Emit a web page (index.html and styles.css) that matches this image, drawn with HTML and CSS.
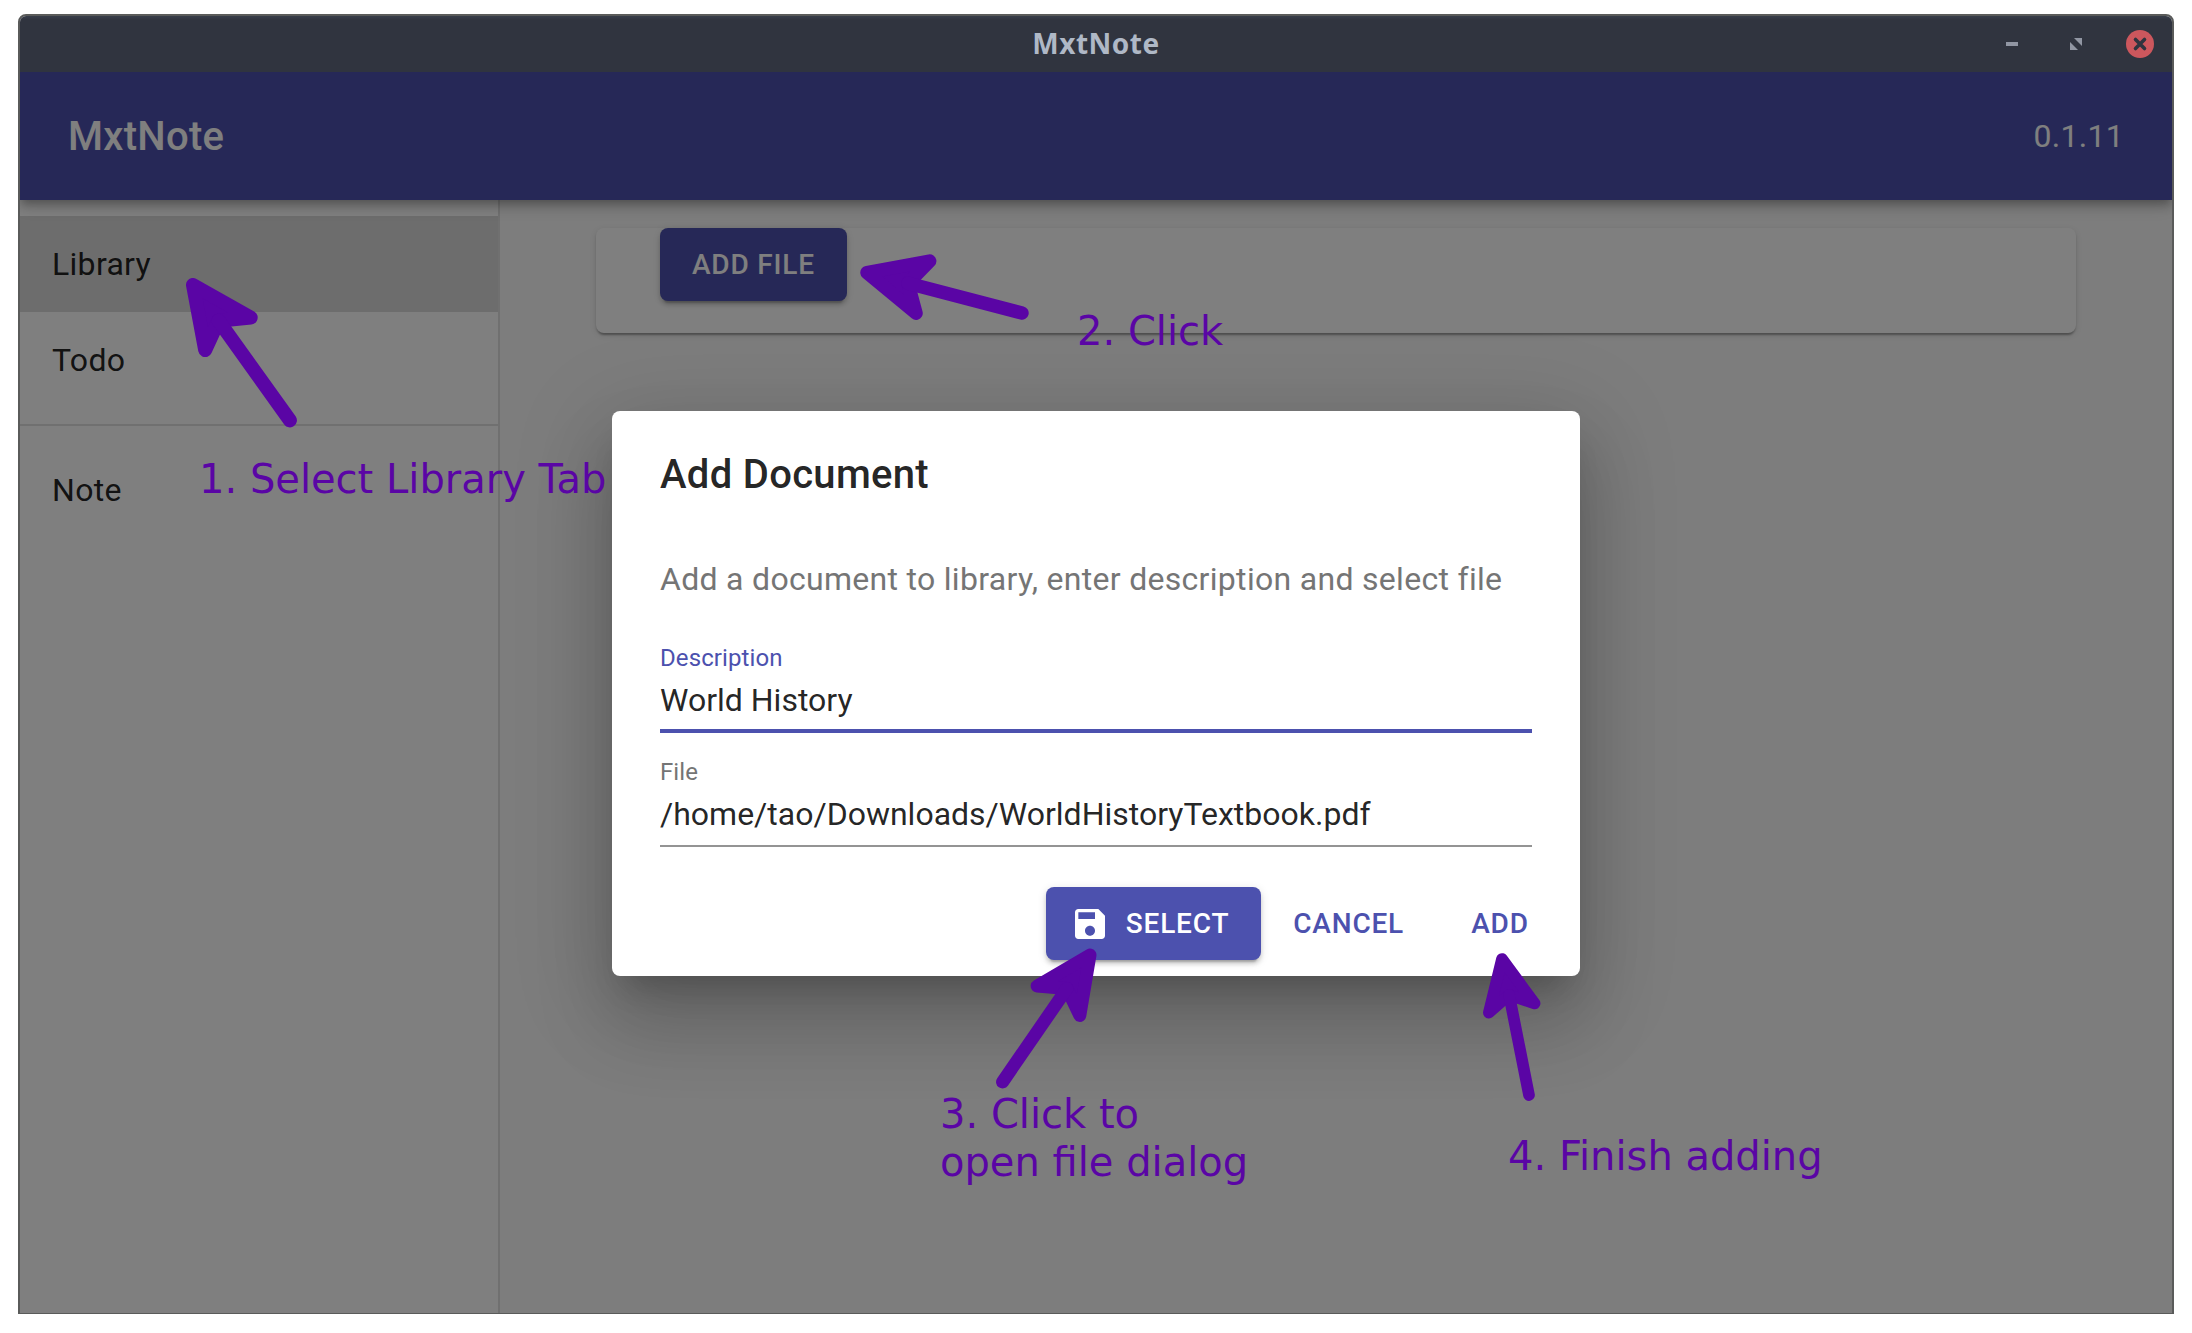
FILE: index.html
```html
<!DOCTYPE html>
<html lang="en">
<head>
<meta charset="utf-8">
<title>MxtNote</title>
<link rel="stylesheet" href="styles.css">
</head>
<body>
<div class="window">
  <header class="titlebar">
    <span class="titlebar-name">MxtNote</span>
    <svg class="window-controls" width="134" height="28" viewBox="0 0 134 28">
      <rect x="0" y="12" width="12" height="4" fill="#9196a3"/>
      <path d="M68 8h8v8zM64 12v8h8z" fill="#9196a3"/>
      <circle cx="134" cy="14" r="14" fill="#cc575d"/>
      <path d="M129.500 9.500l9 9M138.500 9.500l-9 9" stroke="#2f343f" stroke-width="3.600" stroke-linecap="round"/>
    </svg>
  </header>
  <div class="app">
    <header class="appbar">
      <h1 class="appbar-title">MxtNote</h1>
      <span class="appbar-version">0.1.11</span>
    </header>
    <div class="content">
      <nav class="sidebar">
        <div class="nav-group">
          <a class="nav-item selected">Library</a>
          <a class="nav-item">Todo</a>
        </div>
        <div class="nav-group">
          <a class="nav-item">Note</a>
        </div>
      </nav>
      <main class="main">
        <section class="card">
          <button class="button contained">ADD FILE</button>
        </section>
      </main>
    </div>
    <div class="backdrop">
      <section class="dialog">
        <h2 class="dialog-title">Add Document</h2>
        <div class="dialog-content">
          <p class="dialog-text">Add a document to library, enter description and select file</p>
          <div class="field focused">
            <span class="field-label">Description</span>
            <span class="field-value">World History</span>
          </div>
          <div class="field">
            <span class="field-label">File</span>
            <span class="field-value">/home/tao/Downloads/WorldHistoryTextbook.pdf</span>
          </div>
        </div>
        <div class="dialog-actions">
          <button class="button contained">
            <svg class="save-icon" viewBox="0 0 24 24"><path fill="currentColor" d="M17 3H5c-1.110 0-2 .9-2 2v14c0 1.100.89 2 2 2h14c1.100 0 2-.9 2-2V7l-4-4zm-5 16c-1.660 0-3-1.340-3-3s1.340-3 3-3 3 1.340 3 3-1.340 3-3 3zm3-10H5V5h10v4z"/></svg>
            SELECT
          </button>
          <button class="button">CANCEL</button>
          <button class="button">ADD</button>
        </div>
      </section>
    </div>
  </div>
</div>
<div class="annotations">
  <svg class="arrows" width="2192" height="1333" viewBox="0 0 2192 1333">
    <defs>
      <g id="arrow" fill="#5a05a5" stroke="#5a05a5" stroke-width="14" stroke-linecap="round" stroke-linejoin="round">
        <path d="M0 0L60 -28L44 0L60 28Z"/>
        <path d="M44 0H166.500"/>
      </g>
    </defs>
    <use href="#arrow" transform="translate(193 285) rotate(54.400)"/>
    <use href="#arrow" transform="translate(867 272.500) rotate(14.640) scale(.962)"/>
    <use href="#arrow" transform="translate(1090 955) rotate(124.560) scale(.926)"/>
    <use href="#arrow" transform="translate(1502 959) rotate(78.770) scale(.833)"/>
  </svg>
  <span class="note note-library">1. Select Library Tab</span>
  <span class="note note-click">2. Click</span>
  <span class="note note-select">3. Click to<br>open file dialog</span>
  <span class="note note-finish">4. Finish adding</span>
</div>
</body>
</html>
```
FILE: styles.css
```css
* { box-sizing: border-box; }

body {
  margin: 0;
  padding: 14px 18px 19px;
  height: 1333px;
  background: #fff;
  font-family: Roboto, sans-serif;
  font-size: 32px;
  line-height: 1.5;
  letter-spacing: .00938em;
  color: rgba(0, 0, 0, .87);
}

.window {
  display: flex;
  flex-direction: column;
  height: 1300px;
  border: 2px solid #5a5b5a;
  border-bottom-width: 1px;
  border-radius: 8px 8px 0 0;
  overflow: hidden;
}

.titlebar {
  display: grid;
  grid-template-columns: 1fr auto 1fr;
  align-items: center;
  height: 56px;
  flex: none;
  padding-right: 18px;
  background: linear-gradient(#383e4a, #30343f 4px);
}

.titlebar-name {
  grid-column: 2;
  padding-left: 18px;
  font: bold 28px/54px "Noto Sans", sans-serif;
  height: 56px;
  letter-spacing: .5px;
  color: #afb8c6;
}

.window-controls {
  justify-self: end;
  margin-right: 14px;
  overflow: visible;
}

.app {
  position: relative;
  display: flex;
  flex-direction: column;
  flex: 1;
  background: #fafafa;
  overflow: hidden;
}

.appbar {
  z-index: 1;
  display: flex;
  align-items: center;
  justify-content: space-between;
  height: 128px;
  flex: none;
  padding: 0 48px;
  background: #4c51ae;
  color: #fff;
  box-shadow: 0 4px 8px -2px rgba(0, 0, 0, .2), 0 8px 10px rgba(0, 0, 0, .14), 0 2px 20px rgba(0, 0, 0, .12);
}

.appbar-title {
  margin: 0;
  padding-top: 1px;
  font-size: 40px;
  font-weight: 500;
  line-height: 1.6;
  letter-spacing: .0075em;
}

.content {
  display: flex;
  flex: 1;
}

.sidebar {
  width: 480px;
  background: #fff;
  border-right: 2px solid #e0e0e0;
}

.nav-group { padding: 16px 0; }

.nav-group + .nav-group { border-top: 2px solid #e0e0e0; }

.nav-item {
  display: block;
  height: 96px;
  padding: 24px 32px;
}

.nav-item.selected { background: #dadada; }

.main {
  flex: 1;
  padding: 28px 96px;
}

.card {
  display: flex;
  align-items: flex-start;
  height: 105px;
  padding: 0 64px;
  background: #fff;
  border-radius: 8px;
  box-shadow: 0 4px 2px -2px rgba(0, 0, 0, .2), 0 2px 2px rgba(0, 0, 0, .14), 0 2px 6px rgba(0, 0, 0, .12);
}

.button {
  display: flex;
  align-items: center;
  justify-content: center;
  min-width: 128px;
  height: 73px;
  padding: 12px 16px;
  border: 0;
  border-radius: 8px;
  background: none;
  color: #4c51ae;
  font: 500 28px/49px Roboto, sans-serif;
  letter-spacing: .02857em;
}

.button.contained {
  padding: 12px 32px;
  background: #4c51ae;
  color: #fff;
  box-shadow: 0 6px 2px -4px rgba(0, 0, 0, .2), 0 4px 4px rgba(0, 0, 0, .14), 0 2px 10px rgba(0, 0, 0, .12);
}

.save-icon {
  width: 40px;
  height: 40px;
  margin: 0 16px 0 -8px;
}

.backdrop {
  position: absolute;
  inset: 0;
  z-index: 2;
  display: flex;
  align-items: center;
  justify-content: center;
  padding-top: 130px;
  padding-bottom: 128px;
  background: rgba(0, 0, 0, .5);
}

.dialog {
  width: 968px;
  background: #fff;
  border-radius: 8px;
  box-shadow: 0 22px 30px -14px rgba(0, 0, 0, .2), 0 48px 76px 6px rgba(0, 0, 0, .14), 0 18px 92px 16px rgba(0, 0, 0, .12);
}

.dialog-title {
  margin: 0;
  padding: 32px 48px;
  font-size: 40px;
  font-weight: 500;
  line-height: 64px;
  letter-spacing: .0075em;
}

.dialog-content {
  display: flex;
  flex-direction: column;
  padding: 16px 48px;
}

.dialog-text {
  margin: 0 0 24px;
  color: #757575;
}

.field {
  display: flex;
  flex-direction: column;
  height: 90px;
  margin: 16px 0 8px;
  padding-top: 3px;
  border-bottom: 2px solid #949494;
}

.field.focused { border-bottom: 4px solid #4c51ae; }

.field-label {
  margin-bottom: 11px;
  font-size: 24px;
  line-height: 24px;
  letter-spacing: .1px;
  color: #757575;
}

.focused .field-label { color: #4c51ae; }

.field-value {
  line-height: 38px;
  letter-spacing: 0;
}

.dialog-actions {
  display: flex;
  justify-content: flex-end;
  gap: 16px;
  padding: 16px;
}

.annotations {
  position: absolute;
  inset: 0;
  z-index: 3;
}

.arrows {
  position: absolute;
  inset: 0;
}

.note {
  position: absolute;
  font: 40px/48px "DejaVu Sans", sans-serif;
  letter-spacing: 0;
  white-space: nowrap;
  color: #5a05a5;
}

.note-library { left: 199px; top: 455px; }
.note-click { left: 1077px; top: 307px; }
.note-select { left: 940px; top: 1090px; }
.note-finish { left: 1508px; top: 1132px; }
```
